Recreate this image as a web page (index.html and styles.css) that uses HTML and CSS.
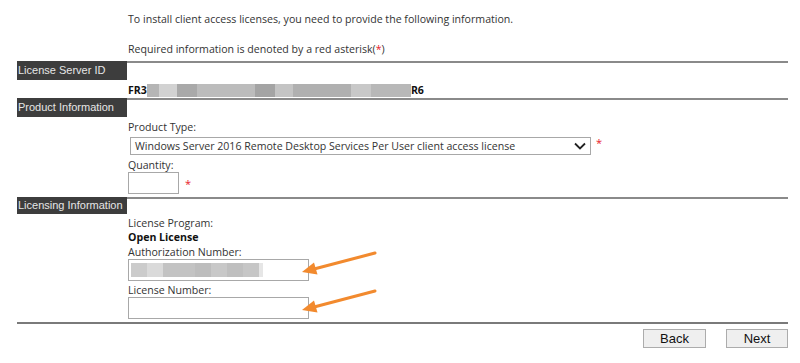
FILE: index.html
```html
<!DOCTYPE html>
<html>
<head>
<meta charset="utf-8">
<link rel="stylesheet" href="styles.css">
</head>
<body>
<div class="page">
  <div class="intro">
    <p class="intro-line first">To install client access licenses, you need to provide the following information.</p>
    <p class="intro-line second">Required information is denoted by a red asterisk(<span class="req">*</span>)</p>
  </div>

  <div class="section-head">
    <div class="bar">License Server ID</div>
    <div class="rule"></div>
  </div>
  <div class="content server-id">
    <span class="bold">FR3</span><span class="blur-strip">
      <i style="width:12px;background:#b5b5b5"></i><i style="width:18px;background:#d2d2d2"></i><i style="width:20px;background:#a9a9a9"></i><i style="width:58px;background:#bcbcbc"></i><i style="width:20px;background:#a4a4a4"></i><i style="width:18px;background:#c4c4c4"></i><i style="width:58px;background:#b0b0b0"></i><i style="width:20px;background:#c8c8c8"></i><i style="width:40px;background:#b8b8b8"></i>
    </span><span class="bold">R6</span>
  </div>

  <div class="section-head">
    <div class="bar">Product Information</div>
    <div class="rule"></div>
  </div>
  <div class="content product">
    <div class="label">Product Type:</div>
    <div class="field-row">
      <div class="select">
        <span class="select-text">Windows Server 2016 Remote Desktop Services Per User client access license</span>
        <svg class="chevron" width="12" height="8" viewBox="0 0 12 8"><path d="M1 1.5 L6 6.5 L11 1.5" fill="none" stroke="#222" stroke-width="1.8"/></svg>
      </div>
      <span class="req star">*</span>
    </div>
    <div class="label qty-label">Quantity:</div>
    <div class="field-row">
      <div class="input qty"></div>
      <span class="req star qty-star">*</span>
    </div>
  </div>

  <div class="section-head third">
    <div class="bar">Licensing Information</div>
    <div class="rule"></div>
  </div>
  <div class="content licensing">
    <div class="label">License Program:</div>
    <div class="label bold">Open License</div>
    <div class="label">Authorization Number:</div>
    <div class="field-row arrow-row">
      <div class="input wide">
        <span class="blur-strip inner">
          <i style="width:16px;background:#cbcbcb"></i><i style="width:16px;background:#dadada"></i><i style="width:32px;background:#c3c3c3"></i><i style="width:16px;background:#bdbdbd"></i><i style="width:16px;background:#c8c8c8"></i><i style="width:16px;background:#bfbfbf"></i><i style="width:16px;background:#c6c6c6"></i><i style="width:4px;background:#e6e6e6"></i>
        </span>
      </div>
      <svg class="arrow" width="80" height="28" viewBox="0 0 80 28"><path d="M75 3 L15 18.7" stroke="#f28a2e" stroke-width="3" stroke-linecap="round" fill="none"/><path d="M2 22 L14 12.5 L17.5 24.5 Z" fill="#f28a2e"/></svg>
    </div>
    <div class="label lic-label">License Number:</div>
    <div class="field-row arrow-row">
      <div class="input wide"></div>
      <svg class="arrow" width="80" height="28" viewBox="0 0 80 28"><path d="M75 3 L15 18.7" stroke="#f28a2e" stroke-width="3" stroke-linecap="round" fill="none"/><path d="M2 22 L14 12.5 L17.5 24.5 Z" fill="#f28a2e"/></svg>
    </div>
  </div>

  <div class="bottom-rule"></div>
  <div class="buttons">
    <button class="btn">Back</button>
    <button class="btn">Next</button>
  </div>
</div>
</body>
</html>
```

FILE: styles.css
```css
html, body {
  margin: 0;
  padding: 0;
  background: #fff;
}
body {
  font-family: "Open Sans", "Noto Sans", sans-serif;
  font-size: 10.6px;
  color: #333;
}
.page {
  width: 771px;
  margin-left: 17px;
}
.intro {
  padding-left: 111px;
}
.intro-line {
  margin: 0;
  line-height: 15px;
}
.intro-line.first {
  padding-top: 12px;
}
.intro-line.second {
  padding-top: 15px;
  height: 19px;
}
.req {
  color: #e8202a;
}
.section-head {
  display: flex;
  height: 19px;
}
.section-head.third {
  height: 17px;
}
.bar {
  width: 110px;
  background: #3d3d3d;
  color: #e6e6e6;
  font-family: "Liberation Sans", Arial, sans-serif;
  font-size: 11px;
  line-height: 19px;
  padding-left: 1px;
  box-sizing: border-box;
  white-space: nowrap;
  overflow: hidden;
}
.section-head.third .bar {
  line-height: 17px;
}
.rule {
  flex: 1;
  border-top: 2px solid #8a8a8a;
  height: 0;
}
.content {
  padding-left: 111px;
}
.bold {
  font-weight: bold;
  color: #111;
}
.server-id {
  height: 18px;
  display: flex;
  align-items: center;
  padding-top: 2px;
  box-sizing: border-box;
}
.blur-strip {
  display: inline-flex;
  height: 13px;
}
.blur-strip i {
  display: block;
  height: 100%;
}
.product {
  padding-top: 2px;
  padding-bottom: 3px;
}
.label {
  line-height: 15px;
  height: 15px;
  padding-top: 1px;
  box-sizing: border-box;
}
.licensing .label:first-child {
  padding-top: 2px;
}
.field-row {
  display: flex;
  align-items: flex-start;
}
.select {
  margin-left: 2px;
  margin-top: 3px;
  width: 461px;
  height: 18px;
  border: 1px solid #a8a8a8;
  box-sizing: border-box;
  display: flex;
  align-items: center;
  justify-content: space-between;
  padding: 0 4px 0 4px;
  color: #333;
}
.select-text {
  white-space: nowrap;
}
.chevron {
  display: block;
}
.star {
  margin-left: 5px;
  margin-top: 3px;
  font-size: 11px;
  line-height: 12px;
}
.qty-label {
  margin-top: 2px;
}
.input {
  border: 1px solid #a8a8a8;
  box-sizing: border-box;
  background: #fff;
}
.qty {
  width: 51px;
  height: 22px;
}
.qty-star {
  margin-left: 6px;
  margin-top: 6px;
}
.licensing {
  padding-top: 0;
}
.input.wide {
  width: 181px;
  height: 22px;
  display: flex;
  align-items: center;
  padding-left: 2px;
}
.blur-strip.inner {
  height: 14px;
}
.arrow-row {
  height: 22px;
}
.arrow {
  margin-left: -9px;
  margin-top: -9px;
  display: block;
}
.lic-label {
  margin-top: 1px;
}
.bottom-rule {
  border-top: 2px solid #7a7a7a;
  margin-top: 3px;
}
.buttons {
  display: flex;
  justify-content: flex-end;
  gap: 20px;
  padding-top: 5px;
}
.btn {
  width: 63px;
  height: 19px;
  margin: 0;
  padding: 0;
  border: 1px solid #acacac;
  background: #efefef;
  font-family: "Liberation Sans", Arial, sans-serif;
  font-size: 13px;
  color: #111;
  line-height: 17px;
}
.btn:last-child {
  width: 62px;
}
```
